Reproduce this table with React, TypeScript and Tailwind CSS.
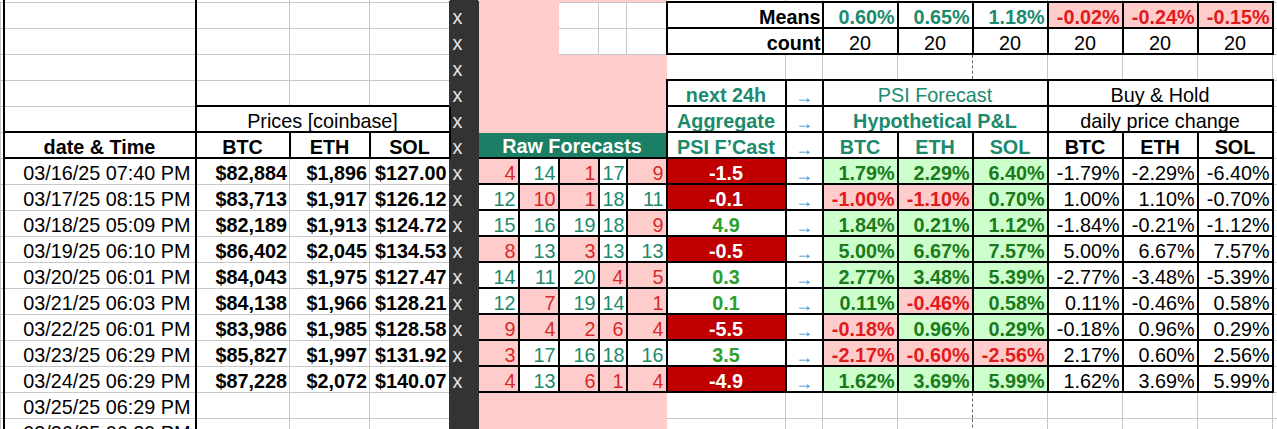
import clsx from "clsx";
import { twMerge } from "tailwind-merge";
import type { ReactNode } from "react";

const G = "border border-[#c8c8c8]";
const K = "border-2 border-black";
const PINK = "bg-[#ffcccc] border border-[#ffcccc]";
const DATE = "border border-[#c8c8c8] border-l-2 border-l-black border-r-2 border-r-black";
const TEAL = "text-[#1c8a6c]";

const widths = [3, 192, 94, 80, 80, 28, 41, 40, 40, 28, 40, 119, 37, 75, 75, 75, 75, 75, 75, 30];

const rows = [
  { d: "03/16/25 07:40 PM", p: ["$82,884", "$1,896", "$127.00"], raw: [4, 14, 1, 17, 9], psi: "-1.5", pl: ["1.79%", "2.29%", "6.40%"], bh: ["-1.79%", "-2.29%", "-6.40%"] },
  { d: "03/17/25 08:15 PM", p: ["$83,713", "$1,917", "$126.12"], raw: [12, 10, 1, 18, 11], psi: "-0.1", pl: ["-1.00%", "-1.10%", "0.70%"], bh: ["1.00%", "1.10%", "-0.70%"] },
  { d: "03/18/25 05:09 PM", p: ["$82,189", "$1,913", "$124.72"], raw: [15, 16, 19, 18, 9], psi: "4.9", pl: ["1.84%", "0.21%", "1.12%"], bh: ["-1.84%", "-0.21%", "-1.12%"] },
  { d: "03/19/25 06:10 PM", p: ["$86,402", "$2,045", "$134.53"], raw: [8, 13, 3, 13, 13], psi: "-0.5", pl: ["5.00%", "6.67%", "7.57%"], bh: ["5.00%", "6.67%", "7.57%"] },
  { d: "03/20/25 06:01 PM", p: ["$84,043", "$1,975", "$127.47"], raw: [14, 11, 20, 4, 5], psi: "0.3", pl: ["2.77%", "3.48%", "5.39%"], bh: ["-2.77%", "-3.48%", "-5.39%"] },
  { d: "03/21/25 06:03 PM", p: ["$84,138", "$1,966", "$128.21"], raw: [12, 7, 19, 14, 1], psi: "0.1", pl: ["0.11%", "-0.46%", "0.58%"], bh: ["0.11%", "-0.46%", "0.58%"] },
  { d: "03/22/25 06:01 PM", p: ["$83,986", "$1,985", "$128.58"], raw: [9, 4, 2, 6, 4], psi: "-5.5", pl: ["-0.18%", "0.96%", "0.29%"], bh: ["-0.18%", "0.96%", "0.29%"] },
  { d: "03/23/25 06:29 PM", p: ["$85,827", "$1,997", "$131.92"], raw: [3, 17, 16, 18, 16], psi: "3.5", pl: ["-2.17%", "-0.60%", "-2.56%"], bh: ["2.17%", "0.60%", "2.56%"] },
  { d: "03/24/25 06:29 PM", p: ["$87,228", "$2,072", "$140.07"], raw: [4, 13, 6, 1, 4], psi: "-4.9", pl: ["1.62%", "3.69%", "5.99%"], bh: ["1.62%", "3.69%", "5.99%"] },
];

const means = [
  { v: "0.60%", neg: false },
  { v: "0.65%", neg: false },
  { v: "1.18%", neg: false },
  { v: "-0.02%", neg: true },
  { v: "-0.24%", neg: true },
  { v: "-0.15%", neg: true },
];

function C({ children, className, span }: { children?: ReactNode; className?: string; span?: number }) {
  return (
    <td
      colSpan={span}
      className={twMerge(
        "p-0 px-[3px] pt-[3px] leading-[20px] whitespace-nowrap overflow-hidden align-middle",
        clsx(className),
      )}
    >
      {children}
    </td>
  );
}

function X({ show = true }: { show?: boolean }) {
  return <C className="bg-[#333333] border-2 border-[#333333] text-[#e6e6e6] text-left pl-[2px]">{show ? "x" : ""}</C>;
}

function Arrow() {
  return <C className={clsx(K, "text-center text-[#3d8fd4] text-[18px] leading-[14px] pt-[7px]")}>→</C>;
}

function Pinks() {
  return (
    <>
      {[0, 1, 2, 3, 4].map((i) => (
        <C key={i} className={PINK} />
      ))}
    </>
  );
}

function BlankRight() {
  return (
    <>
      <C className={G} />
      <C className={G} />
      <C className={G} />
      <C className="border border-[#c8c8c8] border-r-[#666] [border-right-style:dashed]" />
      <C className="border border-[#c8c8c8] border-l-[#666] [border-left-style:dashed]" />
      <C className={G} />
      <C className={G} />
      <C className={G} />
      <C className={G} />
    </>
  );
}

function Sliver({ className }: { className: string }) {
  return <td className={clsx("p-0 h-[2px] leading-[0px] text-[0px]", className)} />;
}

export default function App() {
  return (
    <div className="w-[1277px] h-[429px] overflow-hidden bg-white text-black font-['Liberation_Sans',Arial,sans-serif] text-[19.8px]">
      <table className="table-fixed border-collapse w-[1302px]">
        <colgroup>
          {widths.map((w, i) => (
            <col key={i} style={{ width: w }} />
          ))}
        </colgroup>
        <tbody>
          {/* sliver of the row above */}
          <tr className="h-[2px]">
            <Sliver className="border-r border-r-[#c8c8c8]" />
            <Sliver className="border-x-2 border-black" />
            <Sliver className="border-r border-r-[#c8c8c8]" />
            <Sliver className="border-r border-r-[#c8c8c8]" />
            <Sliver className="" />
            <Sliver className="bg-[#333333]" />
            {[0, 1, 2, 3, 4].map((i) => (
              <Sliver key={i} className="bg-[#ffcccc]" />
            ))}
            {Array.from({ length: 9 }).map((_, i) => (
              <Sliver key={i + "r"} className="border-r border-r-[#c8c8c8]" />
            ))}
          </tr>

          {/* means */}
          <tr className="h-[26px]">
            <C className={G} />
            <C className={DATE} />
            <C className={G} />
            <C className={G} />
            <C className={G} />
            <X />
            <C className={PINK} />
            <C className={PINK} />
            <C className={G} />
            <C className={G} />
            <C className={G} />
            <C span={2} className={clsx(K, "text-right font-bold pr-[1px]")}>
              Means
            </C>
            {means.map((m, i) => (
              <C
                key={i}
                className={clsx(
                  K,
                  "text-right font-bold pr-[2px]",
                  m.neg ? "bg-[#ffcccc] text-[#e01b1b]" : TEAL,
                )}
              >
                {m.v}
              </C>
            ))}
            <C className={G} />
          </tr>

          {/* count */}
          <tr className="h-[26px]">
            <C className={G} />
            <C className={DATE} />
            <C className={G} />
            <C className={G} />
            <C className={G} />
            <X />
            <C className={PINK} />
            <C className={PINK} />
            <C className={G} />
            <C className={G} />
            <C className={G} />
            <C span={2} className={clsx(K, "text-right font-bold pr-[1px]")}>
              count
            </C>
            {means.map((_, i) => (
              <C key={i} className={clsx(K, "text-center")}>
                20
              </C>
            ))}
            <C className={G} />
          </tr>

          {/* blank */}
          <tr className="h-[26px]">
            <C className={G} />
            <C className={DATE} />
            <C className={G} />
            <C className={G} />
            <C className={G} />
            <X />
            <Pinks />
            <BlankRight />
          </tr>

          {/* next 24h */}
          <tr className="h-[26px]">
            <C className={G} />
            <C className={DATE} />
            <C className={G} />
            <C className={G} />
            <C className={G} />
            <X />
            <Pinks />
            <C className={clsx(K, TEAL, "text-center font-bold")}>next 24h</C>
            <Arrow />
            <C span={3} className={clsx(K, TEAL, "text-center")}>
              PSI Forecast
            </C>
            <C span={3} className={clsx(K, "text-center")}>
              Buy &amp; Hold
            </C>
            <C className={G} />
          </tr>

          {/* aggregate */}
          <tr className="h-[26px]">
            <C className={G} />
            <C className={DATE} />
            <C span={3} className={clsx(K, "text-center")}>
              Prices [coinbase]
            </C>
            <X />
            <Pinks />
            <C className={clsx(K, TEAL, "text-center font-bold")}>Aggregate</C>
            <Arrow />
            <C span={3} className={clsx(K, TEAL, "text-center font-bold")}>
              Hypothetical P&amp;L
            </C>
            <C span={3} className={clsx(K, "text-center")}>
              daily price change
            </C>
            <C className={G} />
          </tr>

          {/* column headers */}
          <tr className="h-[26px]">
            <C className={G} />
            <C className={clsx(K, "text-center font-bold")}>date &amp; Time</C>
            {["BTC", "ETH", "SOL"].map((t) => (
              <C key={t} className={clsx(K, "text-center font-bold")}>
                {t}
              </C>
            ))}
            <X />
            <C span={5} className="bg-[#1a7f64] border border-[#1a7f64] text-white text-center font-bold">
              Raw Forecasts
            </C>
            <C className={clsx(K, TEAL, "text-center font-bold")}>PSI F’Cast</C>
            <Arrow />
            {["BTC", "ETH", "SOL"].map((t) => (
              <C key={t} className={clsx(K, TEAL, "text-center font-bold")}>
                {t}
              </C>
            ))}
            {["BTC", "ETH", "SOL"].map((t) => (
              <C key={t + "b"} className={clsx(K, "text-center font-bold")}>
                {t}
              </C>
            ))}
            <C className={G} />
          </tr>

          {rows.map((r) => {
            const neg = r.psi.startsWith("-");
            return (
              <tr key={r.d} className="h-[26px]">
                <C className={G} />
                <C className={clsx(DATE, "text-right pr-[4px]")}>{r.d}</C>
                {r.p.map((v, i) => (
                  <C key={i} className={clsx(G, "text-right font-bold pr-[2px]")}>
                    {v}
                  </C>
                ))}
                <X />
                {r.raw.map((n, i) => (
                  <C
                    key={i}
                    className={clsx(
                      K,
                      "text-right pr-[2px]",
                      n <= 10 ? "bg-[#ffcccc] text-[#d42a2a]" : "bg-white text-[#1c8a6c]",
                    )}
                  >
                    {n}
                  </C>
                ))}
                <C
                  className={clsx(
                    K,
                    "text-center font-bold",
                    neg ? "bg-[#c00000] text-white" : "bg-white text-[#2ca02c]",
                  )}
                >
                  {r.psi}
                </C>
                <Arrow />
                {r.pl.map((v, i) => (
                  <C
                    key={i}
                    className={clsx(
                      K,
                      "text-right font-bold pr-[2px]",
                      v.startsWith("-") ? "bg-[#ffcccc] text-[#e01b1b]" : "bg-[#ccffcc] text-[#1b7a1b]",
                    )}
                  >
                    {v}
                  </C>
                ))}
                {r.bh.map((v, i) => (
                  <C key={i} className={clsx(K, "text-right pr-[2px]")}>
                    {v}
                  </C>
                ))}
                <C className={G} />
              </tr>
            );
          })}

          {["03/25/25 06:29 PM", "03/26/25 06:29 PM"].map((d) => (
            <tr key={d} className="h-[26px]">
              <C className={G} />
              <C className={clsx(DATE, "text-right pr-[4px]")}>{d}</C>
              <C className={G} />
              <C className={G} />
              <C className={G} />
              <X show={false} />
              <Pinks />
              <BlankRight />
            </tr>
          ))}
        </tbody>
      </table>
    </div>
  );
}
